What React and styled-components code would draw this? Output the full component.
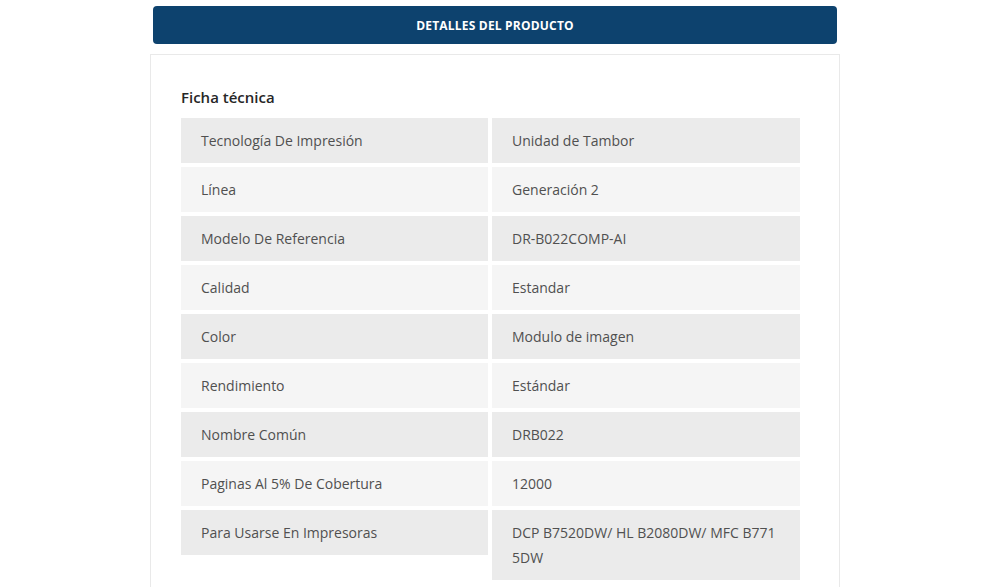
import React from "react";
import styled, { createGlobalStyle } from "styled-components";

const GlobalStyle = createGlobalStyle`
  body {
    margin: 0;
    background: #ffffff;
    font-family: "Open Sans", "Liberation Sans", sans-serif;
  }
`;

const Wrapper = styled.div`
  width: 690px;
  margin: 0 auto;
`;

const TabHeader = styled.div`
  margin: 6px 3px 10px;
  height: 38px;
  background: #0d426e;
  border-radius: 4px;
  display: flex;
  align-items: center;
  justify-content: center;
  color: #ffffff;
  font-size: 12px;
  font-weight: 700;
  letter-spacing: 0.2px;
`;

const Card = styled.div`
  border: 1px solid #e9e9e9;
  border-bottom: none;
  padding: 32px 39px 40px 30px;
  min-height: 560px;
`;

const Title = styled.h3`
  margin: 0 0 11px;
  font-size: 15px;
  font-weight: 600;
  color: #262626;
  line-height: 20px;
`;

const Table = styled.div`
  display: flex;
  flex-direction: column;
  gap: 4px;
`;

const Row = styled.div`
  display: grid;
  grid-template-columns: 307px 308px;
  gap: 4px;
  align-items: start;
`;

const Cell = styled.div`
  background: ${(p) => (p.$odd ? "#ebebeb" : "#f5f5f5")};
  padding: 10px 20px;
  font-size: 14px;
  line-height: 25px;
  color: #505050;
  word-break: break-all;
`;

const rows = [
  ["Tecnología De Impresión", "Unidad de Tambor"],
  ["Línea", "Generación 2"],
  ["Modelo De Referencia", "DR-B022COMP-AI"],
  ["Calidad", "Estandar"],
  ["Color", "Modulo de imagen"],
  ["Rendimiento", "Estándar"],
  ["Nombre Común", "DRB022"],
  ["Paginas Al 5% De Cobertura", "12000"],
  ["Para Usarse En Impresoras", "DCP B7520DW/ HL B2080DW/ MFC B7715DW"],
];

export default function App() {
  return (
    <>
      <GlobalStyle />
      <Wrapper>
        <TabHeader>DETALLES DEL PRODUCTO</TabHeader>
        <Card>
          <Title>Ficha técnica</Title>
          <Table>
            {rows.map(([label, value], i) => (
              <Row key={label}>
                <Cell $odd={i % 2 === 0}>{label}</Cell>
                <Cell $odd={i % 2 === 0}>{value}</Cell>
              </Row>
            ))}
          </Table>
        </Card>
      </Wrapper>
    </>
  );
}
